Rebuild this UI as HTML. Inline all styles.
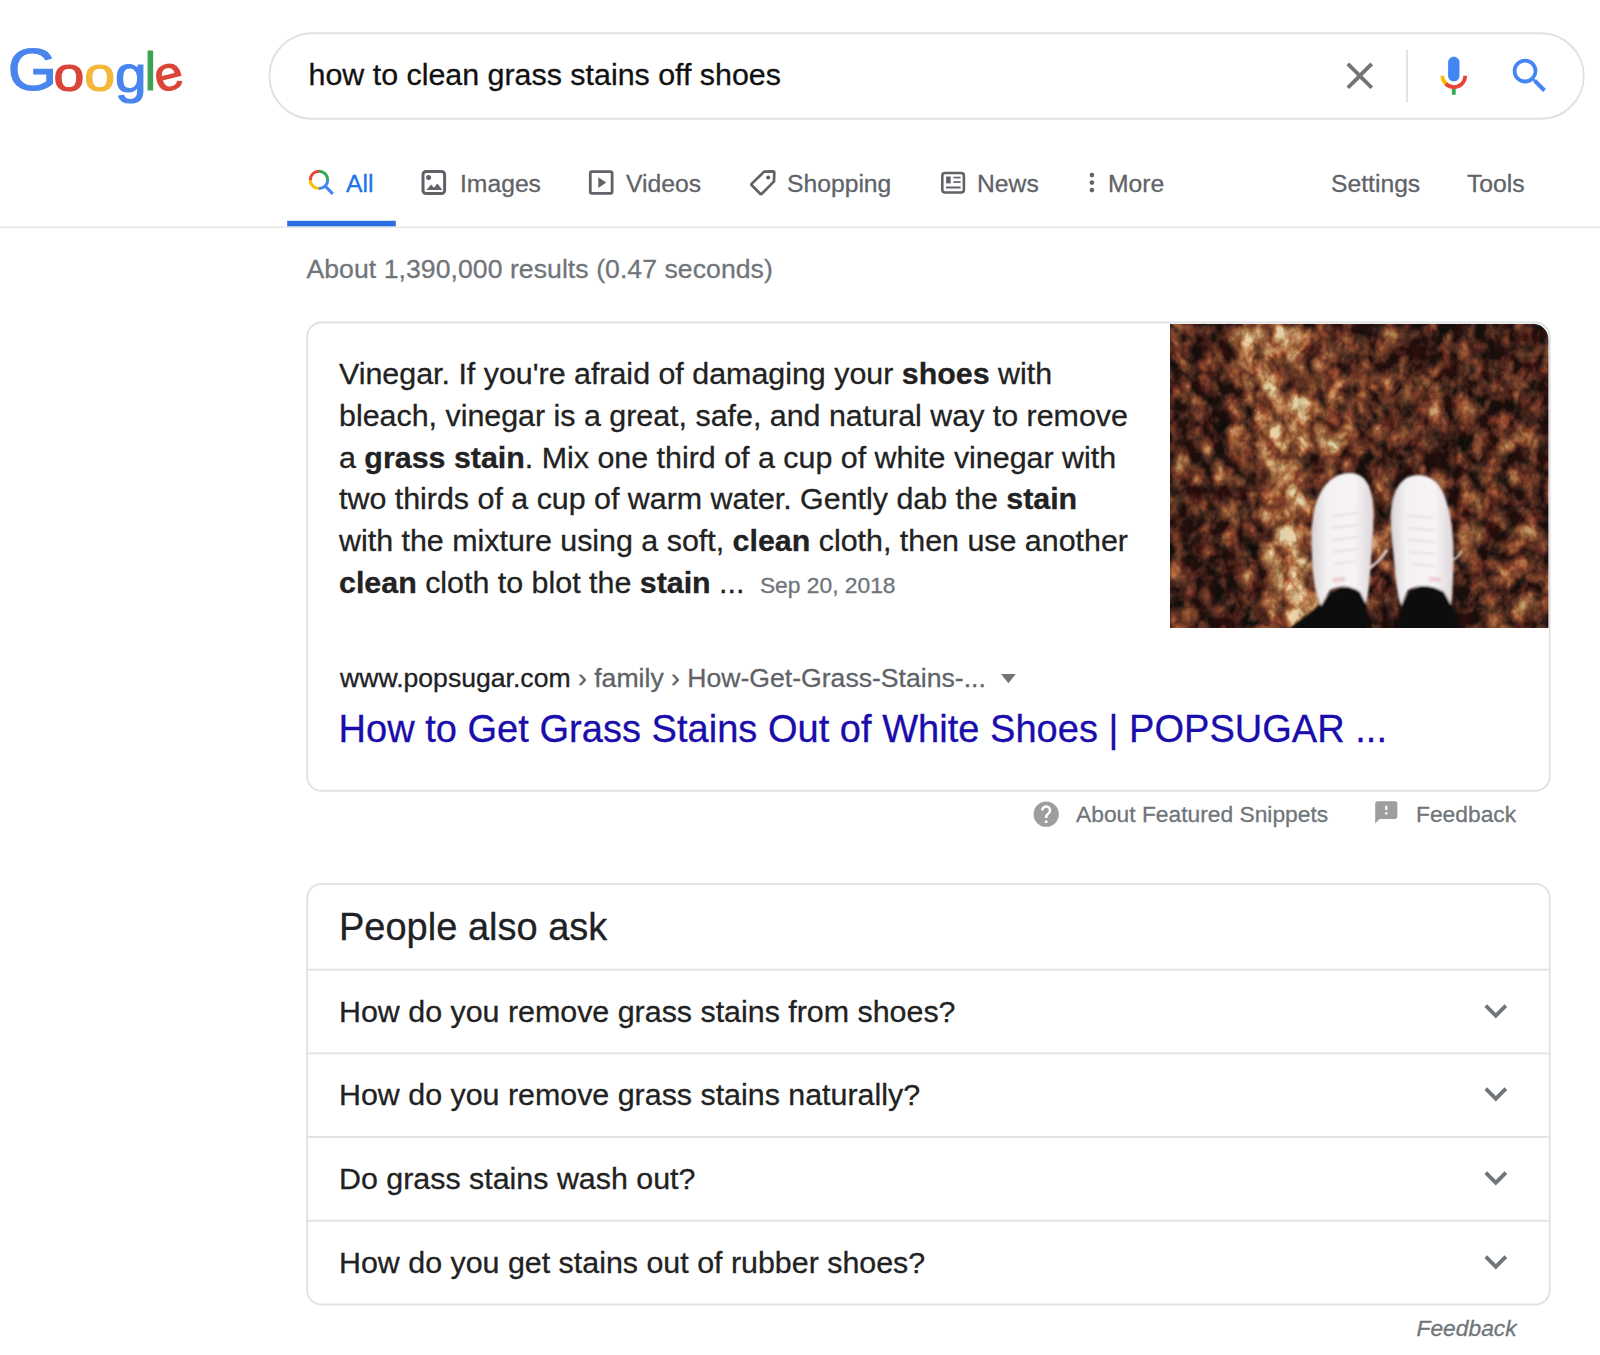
<!DOCTYPE html>
<html lang="en">
<head>
<meta charset="utf-8">
<title>how to clean grass stains off shoes - Google Search</title>
<style>
html,body{margin:0;padding:0;background:#fff;}
body{width:1600px;height:1355px;position:relative;overflow:hidden;font-family:"Liberation Sans",Arial,sans-serif;color:#222;}
.abs{position:absolute;white-space:nowrap;}
.abs,.snip{-webkit-text-stroke:0.3px currentColor;}
/* search box */
.q{left:308.5px;top:57px;font-size:30.4px;line-height:35px;color:#111;}
/* tabs */
.tab{font-size:24.7px;line-height:28px;color:#5f6368;top:170px;}
.tab.on{color:#1a73e8;}
.stats{left:306.4px;top:253.5px;font-size:26.6px;line-height:30px;color:#70757a;letter-spacing:0.06px;}
/* cards */
.snip{position:absolute;left:339px;top:353px;width:820px;font-size:30.4px;line-height:41.8px;color:#222;white-space:nowrap;}
.snip b{font-weight:bold;}
.date{font-size:22.8px;color:#70757a;margin-left:7px;}
.url{left:340px;top:663px;font-size:26.6px;line-height:30px;color:#5f6368;}
.url i{font-style:normal;color:#202124;}
.title{left:338.5px;top:707px;font-size:38px;line-height:44px;color:#1a0dab;letter-spacing:0.03px;}
.foot{font-size:22.8px;line-height:26px;color:#70757a;top:801px;}
.paa{left:339px;top:905px;font-size:38px;line-height:44px;color:#202124;}
.qn{left:339px;font-size:30.4px;line-height:35px;color:#222;}
.fb2{left:1416.5px;top:1315px;font-size:22.8px;line-height:26px;color:#70757a;font-style:italic;}
svg{position:absolute;overflow:visible;}
</style>
</head>
<body>
<!-- LOGO -->
<svg role="img" aria-label="Google" style="left:0;top:30px;width:200px;height:90px;" viewBox="0 30 200 90" font-family="'Liberation Sans',Arial,sans-serif">
<text transform="translate(7.69 89.74) scale(1.056 1)" font-size="60.07" fill="#4885ed" stroke="#4885ed" stroke-width="1.2" stroke-linejoin="round">G</text>
<text transform="translate(53.6 90.5) scale(1.14 1)" font-size="48.6" fill="#db4437" stroke="#db4437" stroke-width="1.2" stroke-linejoin="round">o</text>
<text transform="translate(84.3 90.5) scale(1.14 1)" font-size="48.6" fill="#f4b73a" stroke="#f4b73a" stroke-width="1.2" stroke-linejoin="round">o</text>
<text transform="translate(114.94 92.30) scale(1.085 1)" font-size="52.30" fill="#4885ed" stroke="#4885ed" stroke-width="1.2" stroke-linejoin="round">g</text>
<text transform="translate(144.75 90.3) scale(0.93 1)" font-size="54.4" fill="#3ca352" stroke="#3ca352" stroke-width="1.2" stroke-linejoin="round">l</text>
<text transform="translate(154.43 90.35) rotate(-14 13 -14) scale(1.071 1)" font-size="47.73" fill="#db4437" stroke="#db4437" stroke-width="1.2" stroke-linejoin="round">e</text>
</svg>
<!-- SEARCH BOX -->
<svg style="left:0;top:0;width:1600px;height:1355px;" viewBox="0 0 1600 1355" fill="none">
<rect x="269.4" y="33.25" width="1314.35" height="85.5" rx="42.75" stroke="#dfe1e5" stroke-width="1.9"/>
<rect x="1406.1" y="49.7" width="1.9" height="52.8" fill="#dfe1e5"/>
<rect x="0" y="226.4" width="1600" height="1.7" fill="#e8e8e8"/>
<rect x="287.2" y="220.8" width="108.6" height="5.5" fill="#2a6fdf"/>
<rect x="307.2" y="322.5" width="1242.5" height="468.3" rx="14.3" stroke="#dfe1e5" stroke-width="1.9"/>
<rect x="307.2" y="883.9" width="1242.5" height="420.6" rx="14.3" stroke="#dfe1e5" stroke-width="1.9"/>
<g fill="#e3e3e4">
<rect x="308.1" y="968.7" width="1240.7" height="1.9"/>
<rect x="308.1" y="1052.4" width="1240.7" height="1.9"/>
<rect x="308.1" y="1136.1" width="1240.7" height="1.9"/>
<rect x="308.1" y="1219.8" width="1240.7" height="1.9"/>
</g>
</svg>
<div class="abs q">how to clean grass stains off shoes</div>
<svg style="left:1337.3px;top:53px;width:45.6px;height:45.6px;" viewBox="0 0 24 24"><path fill="#70757a" d="M19 6.41L17.59 5 12 10.59 6.41 5 5 6.41 10.59 12 5 17.59 6.41 19 12 13.59 17.59 19 19 17.59 13.41 12z"/></svg>
<svg style="left:1430.9px;top:53px;width:45.6px;height:45.6px;" viewBox="0 0 24 24"><path fill="#4285f4" d="m12 15c1.66 0 3-1.31 3-2.97v-7.02c0-1.66-1.34-3.01-3-3.01s-3 1.34-3 3.01v7.02c0 1.66 1.34 2.97 3 2.97z"/><path fill="#34a853" d="m11 18.08h2v3.92h-2z"/><path fill="#fbbc05" d="m7.05 16.87c-1.27-1.33-2.05-2.83-2.05-4.87h2c0 1.45 0.56 2.42 1.47 3.38v0.32l-1.15 1.18z"/><path fill="#ea4335" d="m12 16.93a4.97 5.25 0 0 1 -3.54 -1.55l-1.41 1.49c1.26 1.34 3.02 2.13 4.95 2.13 3.87 0 6.99-2.92 6.99-7h-1.99c0 2.92-2.24 4.93-5 4.93z"/></svg>
<svg style="left:1506.9px;top:53px;width:45.6px;height:45.6px;" viewBox="0 0 24 24"><path fill="#4285f4" d="M15.5 14h-.79l-.28-.27A6.471 6.471 0 0 0 16 9.5 6.5 6.5 0 1 0 9.5 16c1.61 0 3.09-.59 4.23-1.57l.27.28v.79l5 4.99L20.49 19l-4.99-5zm-6 0C7.01 14 5 11.99 5 9.5S7.01 5 9.5 5 14 7.01 14 9.5 11.99 14 9.5 14z"/></svg>
<!-- TABS -->
<div class="abs tab on" style="left:346px;">All</div>
<div class="abs tab" style="left:460px;">Images</div>
<div class="abs tab" style="left:626px;">Videos</div>
<div class="abs tab" style="left:787px;">Shopping</div>
<div class="abs tab" style="left:977px;">News</div>
<div class="abs tab" style="left:1108px;">More</div>
<div class="abs tab" style="left:1331px;">Settings</div>
<div class="abs tab" style="left:1467px;">Tools</div>
<svg style="left:300px;top:160px;width:160px;height:50px;" viewBox="300 160 160 50" fill="none">
<g stroke-width="3" fill="none">
<path d="M310.3 179.9A8.7 8.7 0 0 1 319 171.2" stroke="#ea4335"/>
<path d="M319 171.2A8.7 8.7 0 0 1 327.7 179.9" stroke="#34a853"/>
<path d="M310.3 179.9A8.7 8.7 0 0 0 319 188.6" stroke="#fbbc05"/>
<path d="M319 188.6A8.7 8.7 0 0 0 327.7 179.9" stroke="#4285f4"/>
<path d="M325.2 186.1L332.8 193.9" stroke="#4285f4"/>
</g>
<rect x="423" y="171.5" width="21.6" height="22" rx="3" stroke="#5f6368" stroke-width="3"/>
<circle cx="428.6" cy="177.6" r="2.5" fill="#5f6368"/>
<path d="M426.5 190l4.6-5.6 2.9 3.4 3.4-4.3 5 6.5z" fill="#5f6368"/>
</svg>
<svg style="left:580px;top:160px;width:220px;height:50px;" viewBox="580 160 220 50" fill="none">
<rect x="590.3" y="171.7" width="21.8" height="21.6" rx="1.5" stroke="#5f6368" stroke-width="2.8"/>
<path d="M598.3 177.2v10.7l7.9-5.35z" fill="#5f6368"/>
<path d="M751.8 183.6L764.2 171.6L773 171.3Q774.3 171.3 774.3 172.6L774 181.4L761.8 193.8Q761 194.6 760.2 193.8L751.8 185.2Q751 184.4 751.8 183.6z" stroke="#5f6368" stroke-width="2.7" stroke-linejoin="round"/>
<circle cx="768.2" cy="177.5" r="2.1" fill="#5f6368"/>
</svg>
<svg style="left:930px;top:160px;width:220px;height:50px;" viewBox="930 160 220 50" fill="none">
<rect x="942.3" y="173" width="21.6" height="19.5" rx="2.8" stroke="#5f6368" stroke-width="2.6"/>
<rect x="946.1" y="176.5" width="4.6" height="6.9" fill="#5f6368"/>
<rect x="953.4" y="176.7" width="7.2" height="1.7" fill="#5f6368"/>
<rect x="953.4" y="181.2" width="7.2" height="1.7" fill="#5f6368"/>
<rect x="946.1" y="186.5" width="14.5" height="2" fill="#5f6368"/>
<circle cx="1091.9" cy="175.1" r="2.3" fill="#5f6368"/>
<circle cx="1091.9" cy="182.6" r="2.3" fill="#5f6368"/>
<circle cx="1091.9" cy="190.1" r="2.3" fill="#5f6368"/>
</svg>
<div class="abs stats">About 1,390,000 results (0.47 seconds)</div>
<!-- CARD 1 -->
<div class="snip">Vinegar. If you're afraid of damaging your <b>shoes</b> with<br>bleach, vinegar is a great, safe, and natural way to remove<br>a <b>grass stain</b>. Mix one third of a cup of white vinegar with<br>two thirds of a cup of warm water. Gently dab the <b>stain</b><br>with the mixture using a soft, <b>clean</b> cloth, then use another<br><b>clean</b> cloth to blot the <b>stain</b> ... <span class="date">Sep 20, 2018</span></div>
<!-- PHOTO-START -->
<svg class="photo" style="left:1170px;top:323.6px;width:378.4px;height:304px;" viewBox="0 0 378.4 304">
<defs>
<clipPath id="pc"><path d="M0 0H363.4A15 15 0 0 1 378.4 15V304H0z"/></clipPath>
<filter id="leaf" x="0" y="0" width="100%" height="100%" color-interpolation-filters="sRGB">
<feTurbulence type="fractalNoise" baseFrequency="0.07 0.055" numOctaves="4" seed="5" result="n"/>
<feTurbulence type="turbulence" baseFrequency="0.035 0.03" numOctaves="3" seed="12" result="t"/>
<feColorMatrix type="matrix" values="1 0 0 0 0  1 0 0 0 0  1 0 0 0 0  0 0 0 0 1" in="n" result="g"/>
<feColorMatrix type="matrix" values="1.6 0 0 0 0  1.6 0 0 0 0  1.6 0 0 0 0  0 0 0 0 1" in="t" result="tg"/>
<feComposite in="g" in2="tg" operator="arithmetic" k1="0" k2="0.85" k3="0.55" k4="-0.2" result="gt"/>
<feComposite in="gt" in2="SourceGraphic" operator="arithmetic" k1="0" k2="1.15" k3="1" k4="-0.585" result="m"/>
<feComponentTransfer in="m" result="col">
<feFuncR type="table" tableValues="0.12 0.24 0.36 0.50 0.64 0.77 0.90"/>
<feFuncG type="table" tableValues="0.055 0.12 0.19 0.27 0.40 0.59 0.82"/>
<feFuncB type="table" tableValues="0.045 0.095 0.135 0.17 0.24 0.40 0.66"/>
<feFuncA type="linear" slope="0" intercept="1"/>
</feComponentTransfer>
<feColorMatrix type="matrix" values="0 0.2 0 0 0.4  0 0 0 0 0.5  0 0 0 0 0.5  0 0 0 0 1" in="n" result="hue"/>
<feComposite in="col" in2="hue" operator="arithmetic" k1="0" k2="1" k3="1" k4="-0.5" result="c2"/>
<feGaussianBlur in="c2" stdDeviation="0.7"/>
</filter>
<filter id="bl8"><feGaussianBlur stdDeviation="9"/></filter>
<filter id="bl2"><feGaussianBlur stdDeviation="1.2"/></filter>
<linearGradient id="sh" x1="0" y1="0" x2="1" y2="0"><stop offset="0" stop-color="#d9d3d6"/><stop offset="0.25" stop-color="#f4f1f3"/><stop offset="0.7" stop-color="#f6f3f5"/><stop offset="1" stop-color="#ddd6d9"/></linearGradient>
</defs>
<g clip-path="url(#pc)">
<!-- brightness map drawn in greys, converted into leaf litter by the filter -->
<g filter="url(#leaf)">
<rect width="378.4" height="304" fill="#4a4a4a"/>
<g filter="url(#bl8)">
<rect x="-10" y="-10" width="72" height="330" fill="#404040"/>
<path d="M72 -10L122 -10L132 80L124 150L138 230L156 310L106 310L94 220L86 140L82 70z" fill="#bcbcbc"/>
<path d="M108 20L190 40L200 110L150 140L112 120z" fill="#8c8c8c"/>
<path d="M120 150L170 160L160 210L130 200z" fill="#747474"/>
<path d="M200 60L250 70L260 130L210 120z" fill="#606060"/>
<rect x="210" y="-10" width="180" height="60" fill="#464646"/>
<rect x="290" y="40" width="100" height="280" fill="#4a4a4a"/>
<rect x="150" y="240" width="150" height="70" fill="#3a3a3a"/>
</g>
</g>
<!-- legs -->
<g filter="url(#bl2)">
<path d="M118 306L146 284Q160 266 178 262L196 266L198 306z" fill="#0e0b0b"/>
<path d="M226 306L232 280Q240 264 254 261L272 264L284 284L292 306z" fill="#0e0b0b"/>
<!-- shoes -->
<path d="M179.5 149C192 149 199 157 202 172C205 188 203 215 201 236C200 252 199 268 196 280L190 268Q176 258 160 266L151 282C146 272 143 256 142 236C141 215 141 196 146 180C151 162 164 149 179.5 149z" fill="url(#sh)"/>
<path d="M248 151C262 151 271 160 276 176C282 194 284 216 283.500 236C283 252 283 268 281 281L274 268Q256 257 238 266L231 282C227 270 225 252 224 236C222 216 219 196 222 180C225 162 234 151 248 151z" fill="url(#sh)"/>
<g stroke="#e4d8dc" stroke-width="1.5" fill="none" stroke-linecap="round">
<path d="M163 192L188 189M162 204L188 201M162 216L188 213M163 228L187 225M165 240L186 237"/>
<path d="M238 192L262 194M238 204L264 206M239 216L265 218M240 228L265 230M242 240L264 242"/>
</g>
<path d="M162 254L175 252.500L175.500 257L163 258.500z" fill="#efcdd2"/>
<path d="M259 252.500L271 254L270.500 258.500L259 257z" fill="#efcdd2"/>
<path d="M196 246Q208 240 217 226" stroke="#eadfe0" stroke-width="2.4" fill="none"/>
<path d="M283 236Q290 232 292 226" stroke="#e0d0cc" stroke-width="1.8" fill="none"/>
</g>
</g>
</svg>
<!-- PHOTO-END -->
<div class="abs url"><i>www.popsugar.com</i> › family › How-Get-Grass-Stains-...</div>
<div class="abs title">How to Get Grass Stains Out of White Shoes | POPSUGAR ...</div>
<div class="abs foot" style="left:1076px;">About Featured Snippets</div>
<div class="abs foot" style="left:1416px;">Feedback</div>
<svg style="left:1031.4px;top:799.2px;width:30.4px;height:30.4px;" viewBox="0 0 24 24"><path fill="#9e9e9e" d="M12 2C6.48 2 2 6.48 2 12s4.48 10 10 10 10-4.48 10-10S17.52 2 12 2zm1 17h-2v-2h2v2zm2.07-7.75l-.9.92C13.45 12.9 13 13.5 13 15h-2v-.5c0-1.1.45-2.1 1.17-2.83l1.24-1.26c.37-.36.59-.86.59-1.41 0-1.1-.9-2-2-2s-2 .9-2 2H8c0-2.21 1.79-4 4-4s4 1.79 4 4c0 .88-.36 1.68-.93 2.25z"/></svg>
<svg style="left:1373.4px;top:799px;width:26.6px;height:26.6px;" viewBox="0 0 24 24"><path fill="#9e9e9e" d="M20 2H4c-1.1 0-1.99.9-1.99 2L2 22l4-4h14c1.1 0 2-.9 2-2V4c0-1.1-.9-2-2-2zm-7 12h-2v-2h2v2zm0-4h-2V6h2v4z"/></svg>
<svg style="left:1000.9px;top:673.7px;width:14.8px;height:9.2px;" viewBox="0 0 14.8 9.2"><path fill="#70757a" d="M0 0h14.8L7.4 9.2z"/></svg>
<!-- CARD 2 -->
<div class="abs paa">People also ask</div>
<div class="abs qn" style="top:994px;">How do you remove grass stains from shoes?</div>
<div class="abs qn" style="top:1077px;">How do you remove grass stains naturally?</div>
<div class="abs qn" style="top:1161px;">Do grass stains wash out?</div>
<div class="abs qn" style="top:1245px;">How do you get stains out of rubber shoes?</div>
<svg style="left:1472.7px;top:987.6px;width:45.6px;height:45.6px;" viewBox="0 0 24 24"><path fill="#70757a" d="M16.59 8.59L12 13.17 7.41 8.59 6 10l6 6 6-6z"/></svg>
<svg style="left:1472.7px;top:1071.3px;width:45.6px;height:45.6px;" viewBox="0 0 24 24"><path fill="#70757a" d="M16.59 8.59L12 13.17 7.41 8.59 6 10l6 6 6-6z"/></svg>
<svg style="left:1472.7px;top:1155.1px;width:45.6px;height:45.6px;" viewBox="0 0 24 24"><path fill="#70757a" d="M16.59 8.59L12 13.17 7.41 8.59 6 10l6 6 6-6z"/></svg>
<svg style="left:1472.7px;top:1238.8px;width:45.6px;height:45.6px;" viewBox="0 0 24 24"><path fill="#70757a" d="M16.59 8.59L12 13.17 7.41 8.59 6 10l6 6 6-6z"/></svg>

<div class="abs fb2">Feedback</div>
</body>
</html>
